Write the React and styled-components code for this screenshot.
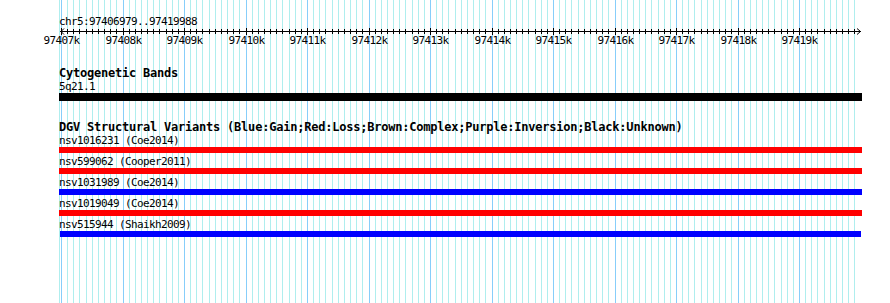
import React from "react";
import styled, { createGlobalStyle } from "styled-components";

// genomic window shown in the panel
const START = 97406979;
const END = 97419988;
const LEFT = 59;
const toX = (p) => Math.floor(61.5 + (p - 97407000) * 0.0615);

const positions = [];
for (let p = 97407000; p < END; p += 100) positions.push(p);

const variants = [
  { id: "nsv1016231", src: "Coe2014", color: "#ff0000", start: 59, end: 862 },
  { id: "nsv599062", src: "Cooper2011", color: "#ff0000", start: 59, end: 862 },
  { id: "nsv1031989", src: "Coe2014", color: "#0000ff", start: 59, end: 862 },
  { id: "nsv1019049", src: "Coe2014", color: "#ff0000", start: 59, end: 862 },
  { id: "nsv515944", src: "Shaikh2009", color: "#0000ff", start: 60, end: 861 },
];

const GlobalStyle = createGlobalStyle`
  html, body {
    margin: 0;
    padding: 0;
    background: #ffffff;
  }
  body {
    font-family: "DejaVu Sans Mono", "Liberation Mono", monospace;
    color: #000;
  }
`;

const Page = styled.div`
  display: grid;
  width: 890px;
  height: 303px;
  overflow: hidden;
  background: #ffffff;

  & > * {
    grid-area: 1 / 1;
  }
`;

const GridLayer = styled.svg`
  display: block;
`;

const Panel = styled.div`
  display: flex;
  flex-direction: column;
  padding: 15px 0 0 ${LEFT}px;
`;

const SmallText = styled.div`
  font-size: 11px;
  line-height: 13px;
  height: 13px;
  letter-spacing: -0.62px;
  white-space: pre;
`;

const TrackTitle = styled.div`
  font-size: 12px;
  font-weight: bold;
  line-height: 13px;
  height: 13px;
  letter-spacing: -0.22px;
  white-space: pre;
  margin-top: ${(p) => p.$gap}px;
`;

const Ruler = styled.svg`
  display: block;
  overflow: visible;
`;

const Section = styled.section`
  display: flex;
  flex-direction: column;
`;

const Row = styled.div`
  display: flex;
  flex-direction: column;
  margin-bottom: 2px;
`;

const Bar = styled.div`
  height: ${(p) => p.$h}px;
  background: ${(p) => p.$color};
  margin-left: ${(p) => p.$start - LEFT}px;
  width: ${(p) => p.$end - p.$start}px;
`;

const Grid = () => (
  <GridLayer width="890" height="303" shapeRendering="crispEdges">
    <rect x={59} y={0} width={1} height={303} fill="#afeeee" />
    {positions.map((p) => (
      <rect
        key={p}
        x={toX(p)}
        y={0}
        width={1}
        height={303}
        fill={p % 1000 === 0 ? "#87cefa" : "#afeeee"}
      />
    ))}
  </GridLayer>
);

const Scale = () => (
  <Ruler width="803" height="20">
    <g shapeRendering="crispEdges">
      <rect x={1} y={3} width={801} height={1} fill="#000" />
      {positions.map((p) => {
        const major = p % 1000 === 0;
        return (
          <rect
            key={p}
            x={toX(p) - LEFT}
            y={major ? 0 : 1}
            width={1}
            height={major ? 7 : 5}
            fill="#000"
          />
        );
      })}
    </g>
    <path d="M5 0.5 L2 3.5 L5 6.5" fill="none" stroke="#000" strokeWidth="1" />
    <path d="M798 0.5 L801.5 3.5 L798 6.5" fill="none" stroke="#000" strokeWidth="1" />
    {positions
      .filter((p) => p % 1000 === 0)
      .map((p) => (
        <text
          key={p}
          x={toX(p) - LEFT + 0.5}
          y={16}
          textAnchor="middle"
          fontFamily='"DejaVu Sans Mono", "Liberation Mono", monospace'
          fontSize="11"
          letterSpacing="-0.62"
          fill="#000"
        >
          {`${p / 1000}k`}
        </text>
      ))}
  </Ruler>
);

const App = () => (
  <>
    <GlobalStyle />
    <Page>
      <Grid />
      <Panel>
        <SmallText>{`chr5:${START}..${END}`}</SmallText>
        <Scale />

        <Section>
          <TrackTitle $gap={19}>Cytogenetic Bands</TrackTitle>
          <SmallText>5q21.1</SmallText>
          <Bar $h={8} $color="#000000" $start={59} $end={862} />
        </Section>

        <Section>
          <TrackTitle $gap={20}>
            DGV Structural Variants (Blue:Gain;Red:Loss;Brown:Complex;Purple:Inversion;Black:Unknown)
          </TrackTitle>
          {variants.map((v) => (
            <Row key={v.id}>
              <SmallText>{`${v.id} (${v.src})`}</SmallText>
              <Bar $h={6} $color={v.color} $start={v.start} $end={v.end} />
            </Row>
          ))}
        </Section>
      </Panel>
    </Page>
  </>
);

export default App;
